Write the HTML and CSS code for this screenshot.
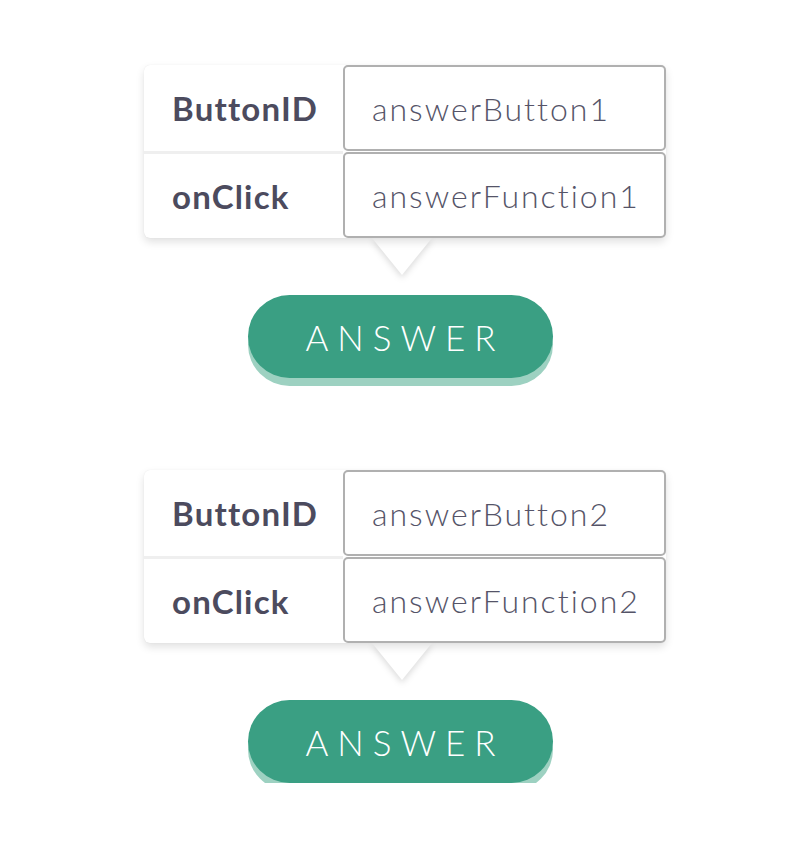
FILE: index.html
```html
<!DOCTYPE html>
<html lang="en">
  <head>
    <meta charset="UTF-8" />
    <meta name="viewport" content="width=device-width, initial-scale=1.0" />
    <title>Answer buttons</title>
    <link rel="stylesheet" href="styles.css">
  </head>
  <body>
    <main class="page">
      <!-- First button -->
      <section class="item">
        <div class="props">
          <div class="prop-row">
            <div class="prop-label">ButtonID</div>
            <div class="prop-value">answerButton1</div>
          </div>
          <div class="prop-row">
            <div class="prop-label">onClick</div>
            <div class="prop-value">answerFunction1</div>
          </div>
        </div>
        <div class="pointer"></div>
        <button class="answer-button">ANSWER</button>
      </section>

      <!-- Second button -->
      <section class="item">
        <div class="props">
          <div class="prop-row">
            <div class="prop-label">ButtonID</div>
            <div class="prop-value">answerButton2</div>
          </div>
          <div class="prop-row">
            <div class="prop-label">onClick</div>
            <div class="prop-value">answerFunction2</div>
          </div>
        </div>
        <div class="pointer"></div>
        <button class="answer-button">ANSWER</button>
      </section>
    </main>
  </body>
</html>
```

FILE: styles.css
```css
html,
body {
  margin: 0;
  padding: 0;
  background: #fff;
}

.page {
  display: flex;
  flex-direction: column;
  gap: 92px;
  padding: 65px 0 0 144px;
  font-family: Lato, "Open Sans", sans-serif;
}

.item {
  display: flex;
  flex-direction: column;
  width: 522px;
}

/* property card */
.props {
  position: relative;
  z-index: 1;
  display: flex;
  flex-direction: column;
  background: #fff;
  border-radius: 6px;
  box-shadow: 0 4px 8px rgba(0, 0, 0, 0.12), 0 0 1px rgba(0, 0, 0, 0.1);
}

.prop-row {
  display: flex;
  height: 86px;
}

.prop-row + .prop-row {
  height: 87px;
}

.prop-label {
  display: flex;
  align-items: center;
  width: 199px;
  padding-left: 28px;
  box-sizing: border-box;
  font-size: 33px;
  font-weight: bold;
  letter-spacing: 1.2px;
  color: #4c4b5e;
}

.prop-row + .prop-row .prop-label {
  border-top: 3px solid #efefef;
}

.prop-value {
  display: flex;
  align-items: center;
  flex: 1;
  padding-left: 27px;
  border: 2px solid #b0b0b0;
  border-radius: 5px;
  font-size: 32px;
  font-weight: 300;
  letter-spacing: 2px;
  color: #555468;
}

.prop-row + .prop-row .prop-value {
  margin-top: 1px;
}

/* little arrow under the card */
.pointer {
  width: 0;
  height: 0;
  margin-left: 228px;
  border-left: 30px solid transparent;
  border-right: 30px solid transparent;
  border-top: 37px solid #fff;
  filter: drop-shadow(0 3px 3px rgba(0, 0, 0, 0.14));
}

.answer-button {
  width: 305px;
  height: 83px;
  margin: 20px 0 0 104px;
  padding: 0 0 0 9px;
  border: none;
  border-radius: 42px;
  background: #3a9f83;
  box-shadow: 0 8px 0 #9dd1c1;
  font-family: Lato, sans-serif;
  font-size: 35px;
  font-weight: 300;
  letter-spacing: 9px;
  color: #fff;
  cursor: pointer;
}
```
